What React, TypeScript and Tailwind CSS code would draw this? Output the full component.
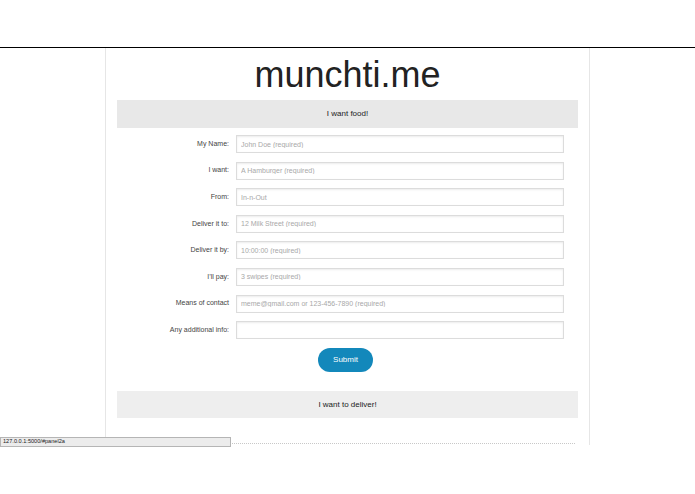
import React from 'react';

const fields = [
  { label: 'My Name:', placeholder: 'John Doe (required)' },
  { label: 'I want:', placeholder: 'A Hamburger (required)' },
  { label: 'From:', placeholder: 'In-n-Out' },
  { label: 'Deliver it to:', placeholder: '12 Milk Street (required)' },
  { label: 'Deliver it by:', placeholder: '10:00:00 (required)' },
  { label: 'I\u2019ll pay:', placeholder: '3 swipes (required)' },
  { label: 'Means of contact', placeholder: 'meme@gmail.com or 123-456-7890 (required)' },
  { label: 'Any additional info:', placeholder: '' },
];

export default function App() {
  return (
    <div
      className="relative w-[695px] h-[494px] bg-white overflow-hidden"
      style={{ fontFamily: '"Liberation Sans", Arial, sans-serif' }}
    >
      <div className="h-[47px]" />
      <div className="border-t border-black">
        <div className="mx-auto w-[485px] h-[397px] border-x border-[#e6e6e6] flex flex-col">
          {/* Title */}
          <h1 className="h-[52px] flex items-center justify-center text-[36px] leading-none text-[#222] pt-[2px]">
            munchti.me
          </h1>

          {/* I want food */}
          <div className="mx-[11px] h-[28px] bg-[#e8e8e8] flex items-center justify-center text-[8px] text-[#222]">
            I want food!
          </div>

          {/* Form */}
          <form className="mt-[7px] flex flex-col gap-[8.6px]" onSubmit={(e) => e.preventDefault()}>
            {fields.map((f) => (
              <div key={f.label} className="grid grid-cols-[123px_328px] gap-x-[7px] items-center h-[18px]">
                <label className="text-right text-[7px] text-[#444]">{f.label}</label>
                <input
                  type="text"
                  placeholder={f.placeholder}
                  className="h-[18px] px-[4px] border border-[#dcdcdc] bg-white text-[7px] text-[#333] placeholder:text-[#a8a8a8] shadow-[inset_0_1px_2px_rgba(0,0,0,0.08)] outline-none"
                />
              </div>
            ))}
            <button
              type="submit"
              className="mt-[0.4px] ml-[212px] w-[55px] h-[24px] rounded-full bg-[#1388bb] text-white text-[8px]"
            >
              Submit
            </button>
          </form>

          {/* I want to deliver */}
          <div className="mt-[19px] mx-[11px] h-[27px] bg-[#eeeeee] flex items-center justify-center text-[8px] text-[#222]">
            I want to deliver!
          </div>

          <div className="mt-[25px] mx-[11px] mr-[14px] border-t border-dotted border-[#c8c8c8]" />
        </div>
      </div>

      {/* browser status overlay */}
      <div className="absolute left-0 top-[437px] w-[231px] h-[10px] bg-[#ececec] border border-[#b5b5b5] flex items-center pl-[2px] text-[5.6px] leading-none text-[#222]">
        127.0.0.1:5000/#panel2a
      </div>
    </div>
  );
}
